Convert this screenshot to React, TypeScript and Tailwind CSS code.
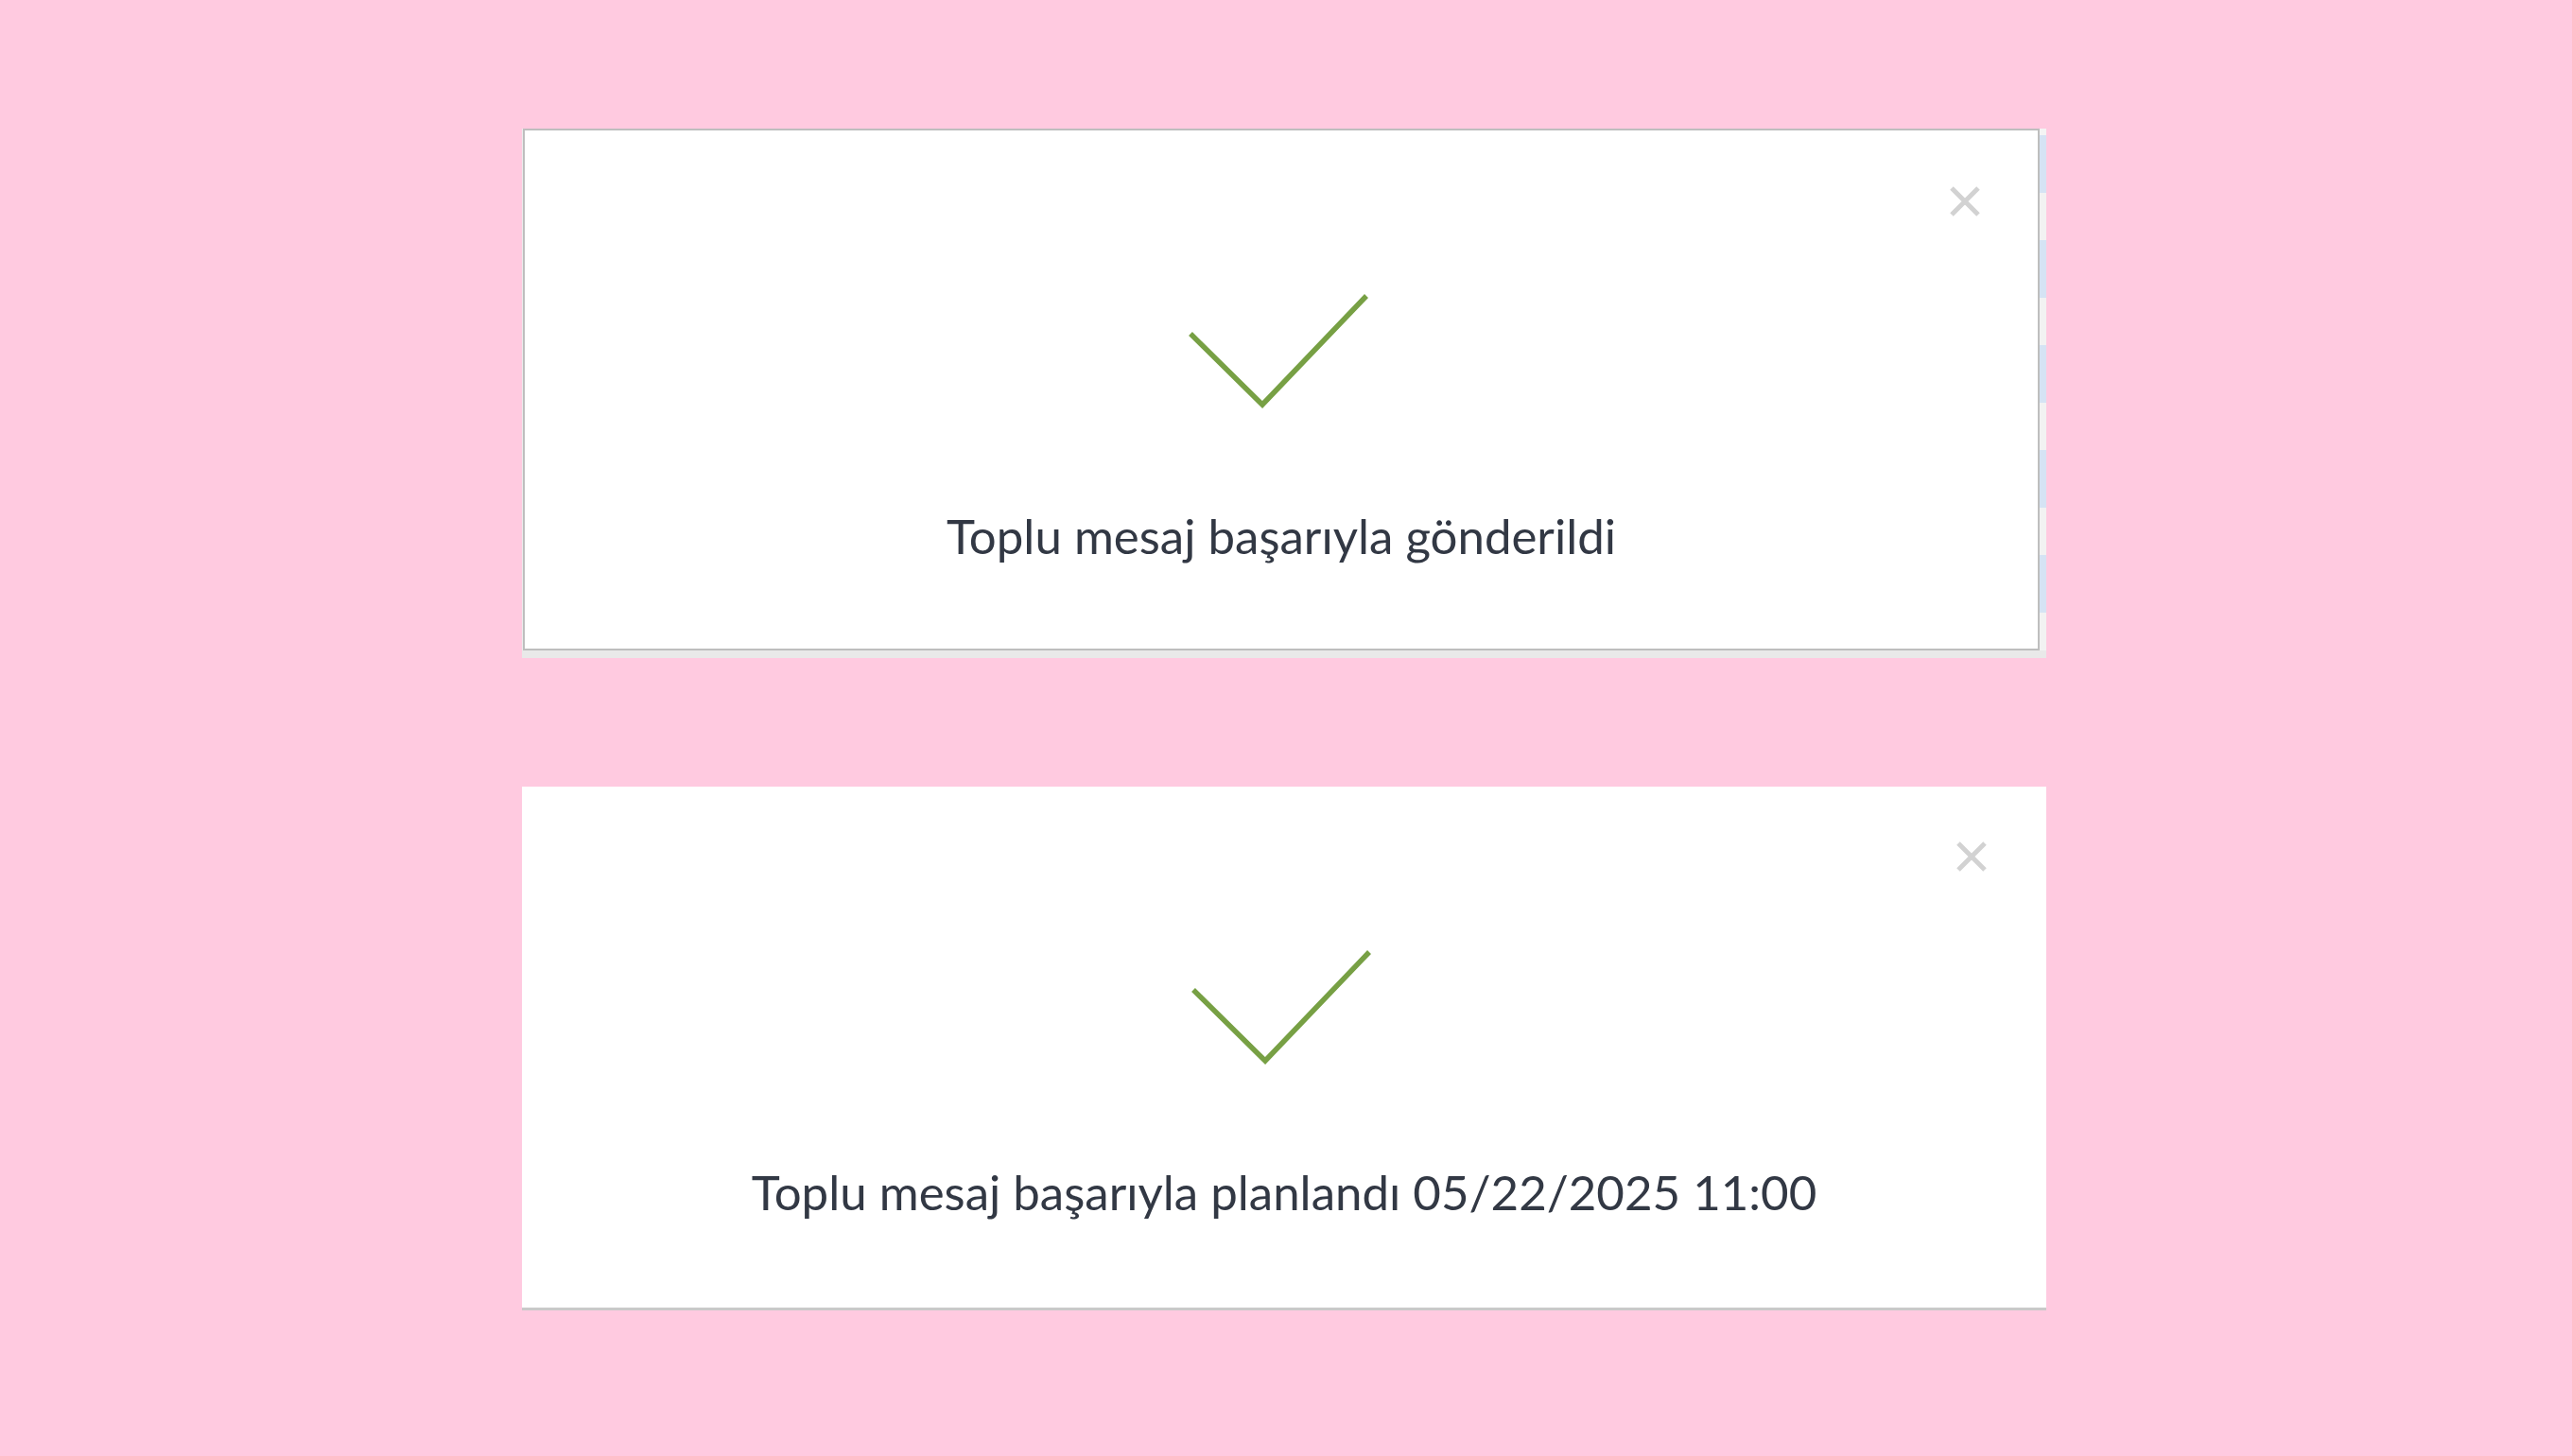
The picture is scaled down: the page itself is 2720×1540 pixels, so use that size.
import React from "react";

function CloseIcon() {
  return (
    <svg width="34" height="34" viewBox="0 0 34 34" fill="none">
      <path d="M3 3 L31 31 M31 3 L3 31" stroke="#d2d2d2" strokeWidth="5" strokeLinecap="butt" />
    </svg>
  );
}

function Check() {
  return (
    <svg width="196" height="125" viewBox="0 0 196 125" fill="none" className="mr-[6px]">
      <path d="M5 45 L81 120 L191 5" stroke="#77a044" strokeWidth="5.5" strokeLinejoin="miter" />
    </svg>
  );
}

function CardBody({ text }: { text: string }) {
  return (
    <div className="flex flex-col items-center pt-[170px]">
      <Check />
      <div
        className="mt-[104px] text-[51px] leading-[60px] text-[#323844] whitespace-nowrap"
        style={{ fontFamily: "Lato, 'Liberation Sans', sans-serif" }}
      >
        {text}
      </div>
    </div>
  );
}

export default function App() {
  const stripes = [0, 1, 2, 3, 4];
  return (
    <div className="min-h-[1540px] w-full bg-[#ffcae0] pt-[136px]">
      <div className="ml-[552px] w-[1612px] flex flex-col gap-[136px]">
        {/* Card 1 with backing page */}
        <div className="flex flex-col bg-[#ececec]">
          <div className="flex h-[552px]">
            <div className="relative h-[552px] w-[1604px] ml-px border-2 border-[#bebebe] bg-white">
              <button className="absolute top-[58px] right-[60px]">
                <CloseIcon />
              </button>
              <CardBody text="Toplu mesaj başarıyla gönderildi" />
            </div>
            <div className="flex h-[552px] w-[7px] flex-col overflow-hidden bg-[#f4f4f4] pt-[7px]">
              {stripes.map((i) => (
                <div key={i} className="flex shrink-0 flex-col">
                  <div className="h-[61px] bg-[#d5e3f4]" />
                  <div className="h-[50px] bg-[#f2f2f2]" />
                </div>
              ))}
            </div>
          </div>
          <div className="h-[8px] bg-[#e9e9e9]" />
        </div>

        {/* Card 2 */}
        <div className="relative h-[554px] w-[1612px] bg-white border-b-[3px] border-[#c9c9c9]">
          <button className="absolute top-[57px] right-[62px]">
            <CloseIcon />
          </button>
          <CardBody text="Toplu mesaj başarıyla planlandı 05/22/2025 11:00" />
        </div>
      </div>
    </div>
  );
}
